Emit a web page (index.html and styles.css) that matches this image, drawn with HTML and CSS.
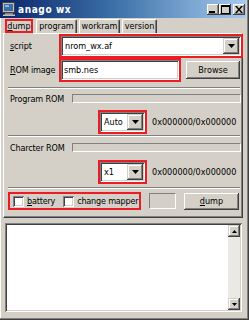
FILE: index.html
```html
<!DOCTYPE html>
<html>
<head>
<meta charset="utf-8">
<link rel="stylesheet" href="styles.css">
</head>
<body>
<div class="window">
  <div class="titlebar">
    <svg class="appicon" width="14" height="14" viewBox="0 0 14 14">
      <rect x="0.5" y="0.5" width="12" height="10" fill="#c0c0c0" stroke="#404040"/>
      <rect x="2" y="2" width="9" height="7" fill="#3a6ea5"/>
      <rect x="3" y="3" width="4" height="2" fill="#8fb4dc"/>
      <rect x="3" y="11" width="8" height="2" fill="#808080"/>
      <rect x="1" y="12.5" width="12" height="1.5" fill="#c0c0c0"/>
    </svg>
    <span class="title">anago wx</span>
    <div class="ctrls">
      <div class="cbtn"><svg width="8" height="7" viewBox="0 0 8 7"><rect x="0" y="5" width="6" height="2" fill="#000"/></svg></div>
      <div class="cbtn"><svg width="9" height="9" viewBox="0 0 9 9"><rect x="0.5" y="0.5" width="8" height="8" fill="none" stroke="#000"/><rect x="0" y="0" width="9" height="2" fill="#000"/></svg></div>
      <div class="cbtn close"><svg width="8" height="7" viewBox="0 0 8 7"><path d="M0 0h2l2 2.5l2-2.5h2l-3 3.5l3 3.5h-2l-2-2.5l-2 2.5h-2l3-3.5z" fill="#000"/></svg></div>
    </div>
  </div>
  <div class="client">
    <div class="notebook">
      <div class="tabs">
        <div class="tab active"><span class="tabmark"><u>d</u>ump</span></div>
        <div class="tab t-program">program</div>
        <div class="tab t-workram">workram</div>
        <div class="tab t-version">version</div>
      </div>
      <div class="page">
        <div class="row r-script">
          <span class="label"><u>s</u>cript</span>
          <div class="mark w-script">
            <div class="combo">
              <span class="val">nrom_wx.af</span>
              <span class="dd"><svg width="7" height="4" viewBox="0 0 7 4"><path d="M0 0h7l-3.5 4z" fill="#000"/></svg></span>
            </div>
          </div>
        </div>
        <div class="row r-rom">
          <span class="label"><u>R</u>OM image</span>
          <div class="mark w-rom">
            <div class="edit"><span class="val">smb.nes</span></div>
          </div>
          <div class="btn browse">Browse</div>
        </div>
        <div class="sep s1"></div>
        <div class="row r-gauge g1">
          <span class="label glabel">Program ROM</span>
          <div class="gauge"></div>
        </div>
        <div class="row r-sel sel1">
          <div class="mark w-small">
            <div class="combo">
              <span class="val">Auto</span>
              <span class="dd"><svg width="7" height="4" viewBox="0 0 7 4"><path d="M0 0h7l-3.5 4z" fill="#000"/></svg></span>
            </div>
          </div>
          <span class="addr">0x000000/0x000000</span>
        </div>
        <div class="sep s2"></div>
        <div class="row r-gauge g2">
          <span class="label glabel">Charcter ROM</span>
          <div class="gauge"></div>
        </div>
        <div class="row r-sel sel2">
          <div class="mark w-small">
            <div class="combo">
              <span class="val">x1</span>
              <span class="dd"><svg width="7" height="4" viewBox="0 0 7 4"><path d="M0 0h7l-3.5 4z" fill="#000"/></svg></span>
            </div>
          </div>
          <span class="addr">0x000000/0x000000</span>
        </div>
        <div class="sep s3"></div>
        <div class="row r-bottom">
          <div class="mark w-checks">
            <span class="check"></span><span class="clabel"><u>b</u>attery</span>
            <span class="check c2"></span><span class="clabel">change mapper</span>
          </div>
          <div class="blank"></div>
          <div class="btn dumpbtn"><u>d</u>ump</div>
        </div>
      </div>
    </div>
    <div class="log">
      <div class="logtext"></div>
      <div class="vscroll">
        <div class="sbtn"><svg width="5" height="3" viewBox="0 0 5 3"><path d="M2.5 0l2.5 3h-5z" fill="#000"/></svg></div>
        <div class="track"></div>
        <div class="sbtn"><svg width="5" height="3" viewBox="0 0 5 3"><path d="M0 0h5l-2.5 3z" fill="#000"/></svg></div>
      </div>
    </div>
  </div>
</div>
</body>
</html>
```
FILE: styles.css
```css
* { box-sizing: border-box; }
html, body {
  margin: 0;
  padding: 0;
  width: 249px;
  height: 320px;
  overflow: hidden;
  background: #d4d0c8;
  font: 9px "DejaVu Sans Condensed", "Liberation Sans", Arial, sans-serif;
  color: #000;
}
u { text-decoration: underline; text-underline-offset: 1px; }

.window {
  width: 249px;
  height: 320px;
  display: flex;
  flex-direction: column;
  background: #d4d0c8;
  padding: 0 3px 3px 0;
  box-shadow: inset -1px -1px #404040, inset -2px -2px #808080, inset 1px 0 #ffffff;
}

/* title bar */
.titlebar {
  height: 18px;
  flex: none;
  display: flex;
  align-items: center;
  background: linear-gradient(to right, #0a246a 0%, #3a6ea5 45%, #a6caf0 100%);
  padding-left: 2px;
}
.appicon { flex: none; }
.title {
  color: #fff;
  font-weight: bold;
  font-size: 10px;
  margin-left: 2px;
  letter-spacing: 0.6px;
}
.ctrls {
  margin-left: auto;
  display: flex;
  margin-right: 1px;
}
.cbtn {
  width: 12px;
  height: 11px;
  background: #d4d0c8;
  box-shadow: inset -1px -1px #404040, inset 1px 1px #ffffff, inset -2px -2px #808080;
  display: flex;
  align-items: center;
  justify-content: center;
}
.cbtn.close { margin-left: 2px; }

/* client */
.client {
  flex: 1;
  display: flex;
  flex-direction: column;
}
.notebook {
  margin: 0 3px 0 3px;
  display: flex;
  flex-direction: column;
}
.tabs {
  height: 15px;
  display: flex;
  align-items: flex-end;
  position: relative;
  z-index: 1;
}
.tab {
  height: 14px;
  margin-right: 2px;
  line-height: 13px;
  text-align: center;
  border-top: 1px solid #fff;
  border-left: 1px solid #fff;
  border-right: 1px solid #404040;
  border-top-left-radius: 2px;
  border-top-right-radius: 2px;
  box-shadow: inset -1px 0 #808080;
  background: #d4d0c8;
  flex: none;
}
.t-program { width: 41px; }
.t-workram { width: 41px; }
.t-version { width: 35px; }
.tab.active {
  height: 16px;
  margin: 0 3px -1px 2px;
  border: none;
  box-shadow: none;
}
.tabmark {
  display: block;
  border: 2px solid #ec1c24;
  height: 14px;
  width: 28px;
  line-height: 10px;
  margin-top: 1px;
  text-align: center;
}
.page {
  height: 185px;
  background: #d4d0c8;
  border-top: 1px solid #fff;
  border-left: 1px solid #fff;
  border-right: 1px solid #404040;
  border-bottom: 1px solid #404040;
  box-shadow: inset -1px -1px #808080;
  display: flex;
  flex-direction: column;
}

.row {
  display: flex;
  align-items: center;
  flex: none;
}
.label {
  flex: none;
  padding-left: 6px;
  width: 55px;
  white-space: nowrap;
  letter-spacing: -0.15px;
}
.mark {
  border: 2px solid #ec1c24;
  flex: none;
}
.w-script { width: 184px; }
.w-rom { width: 122px; }
.w-small { width: 49px; }

.combo, .edit {
  height: 20px;
  background: #fff;
  box-shadow: inset 1px 1px #808080, inset -1px -1px #ffffff, inset 2px 2px #404040, inset -2px -2px #d4d0c8;
  display: flex;
  align-items: center;
  padding: 2px;
}
.val { padding-left: 2px; flex: 1; white-space: nowrap; overflow: hidden; }
.dd {
  width: 16px;
  height: 16px;
  flex: none;
  background: #d4d0c8;
  box-shadow: inset -1px -1px #404040, inset 1px 1px #d4d0c8, inset -2px -2px #808080, inset 2px 2px #ffffff;
  display: flex;
  align-items: center;
  justify-content: center;
}
.edit .val { padding-left: 1px; }

.btn {
  background: #d4d0c8;
  box-shadow: inset -1px -1px #404040, inset 1px 1px #ffffff, inset -2px -2px #808080;
  display: flex;
  align-items: center;
  justify-content: center;
  flex: none;
}
.browse {
  width: 54px;
  height: 18px;
  margin-left: 5px;
}

.sep {
  height: 2px;
  margin-left: 4px;
  width: 232px;
  border-top: 1px solid #808080;
  border-bottom: 1px solid #fff;
  flex: none;
}
.s1 { margin-top: 5px; }
.s2 { margin-top: 1px; }
.s3 { margin-top: 3px; }

.r-gauge { height: 11px; }
.g1 { margin-top: 4px; }
.g2 { margin-top: 5px; }
.glabel { width: 68px; }
.gauge {
  width: 169px;
  height: 9px;
  border-top: 1px solid #808080;
  border-left: 1px solid #808080;
  border-bottom: 1px solid #fff;
  border-right: 1px solid #fff;
}

.r-sel { padding-left: 94px; }
.sel1 { margin-top: 6px; }
.sel2 { margin-top: 7px; }
.addr { margin-left: 5px; white-space: nowrap; }

.r-bottom { margin-top: 3px; padding-left: 4px; }
.w-checks {
  width: 133px;
  height: 18px;
  display: flex;
  align-items: center;
  padding-left: 3px;
  white-space: nowrap;
  overflow: hidden;
  letter-spacing: -0.2px;
}
.check {
  width: 11px;
  height: 11px;
  flex: none;
  background: #fff;
  box-shadow: inset 1px 1px #808080, inset -1px -1px #ffffff, inset 2px 2px #404040, inset -2px -2px #d4d0c8;
}
.clabel { margin-left: 3px; }
.c2 { margin-left: 8px; }
.blank {
  width: 27px;
  height: 16px;
  margin-left: 8px;
  border-top: 1px solid #808080;
  border-left: 1px solid #808080;
  border-bottom: 1px solid #fff;
  border-right: 1px solid #fff;
}
.dumpbtn {
  width: 55px;
  height: 17px;
  margin-left: 8px;
}

/* log */
.log {
  flex: 1;
  margin: 5px 4px 5px 5px;
  display: flex;
  background: #fff;
  box-shadow: inset 1px 1px #808080, inset -1px -1px #ffffff, inset 2px 2px #404040, inset -2px -2px #d4d0c8;
  padding: 2px;
}
.logtext { flex: 1; }
.vscroll {
  width: 12px;
  display: flex;
  flex-direction: column;
  background: #ebe9e5;
}
.sbtn {
  height: 12px;
  background: #d4d0c8;
  box-shadow: inset -1px -1px #404040, inset 1px 1px #d4d0c8, inset -2px -2px #808080, inset 2px 2px #ffffff;
  display: flex;
  align-items: center;
  justify-content: center;
}
.track { flex: 1; }
```
